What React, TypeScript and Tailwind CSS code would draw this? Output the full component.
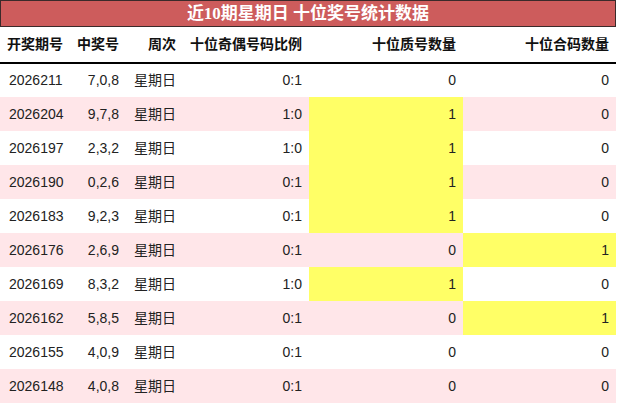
const rows = [
  { issue: "2026211", nums: "7,0,8", ratio: "0:1", prime: 0, composite: 0 },
  { issue: "2026204", nums: "9,7,8", ratio: "1:0", prime: 1, composite: 0 },
  { issue: "2026197", nums: "2,3,2", ratio: "1:0", prime: 1, composite: 0 },
  { issue: "2026190", nums: "0,2,6", ratio: "0:1", prime: 1, composite: 0 },
  { issue: "2026183", nums: "9,2,3", ratio: "0:1", prime: 1, composite: 0 },
  { issue: "2026176", nums: "2,6,9", ratio: "0:1", prime: 0, composite: 1 },
  { issue: "2026169", nums: "8,3,2", ratio: "1:0", prime: 1, composite: 0 },
  { issue: "2026162", nums: "5,8,5", ratio: "0:1", prime: 0, composite: 1 },
  { issue: "2026155", nums: "4,0,9", ratio: "0:1", prime: 0, composite: 0 },
  { issue: "2026148", nums: "4,0,8", ratio: "0:1", prime: 0, composite: 0 },
];

export default function App() {
  return (
    <main
      className="w-[616px] bg-white text-[#222]"
      style={{ fontFamily: '"Liberation Sans", "Noto Sans CJK SC", sans-serif' }}
    >
      {/* Title bar */}
      <div
        className="h-[27px] flex items-center justify-center bg-[#cd5c5c] border border-[#3a2a2a] text-white font-bold text-[17px] leading-none"
        style={{ fontFamily: '"Liberation Serif", "Noto Sans CJK SC", serif' }}
      >
        近10期星期日 十位奖号统计数据
      </div>

      <table className="w-full table-fixed border-collapse text-[14px]">
        <colgroup>
          <col className="w-[70px]" />
          <col className="w-[56px]" />
          <col className="w-[57px]" />
          <col className="w-[126px]" />
          <col className="w-[154px]" />
          <col className="w-[153px]" />
        </colgroup>
        <thead>
          <tr className="h-[36px] border-b-2 border-black text-[#111]">
            <th className="pr-[7px] text-right font-bold whitespace-nowrap">开奖期号</th>
            <th className="pr-[7px] text-right font-bold whitespace-nowrap">中奖号</th>
            <th className="pr-[7px] text-right font-bold whitespace-nowrap">周次</th>
            <th className="pr-[7px] text-right font-bold whitespace-nowrap">十位奇偶号码比例</th>
            <th className="pr-[7px] text-right font-bold whitespace-nowrap">十位质号数量</th>
            <th className="pr-[7px] text-right font-bold whitespace-nowrap">十位合码数量</th>
          </tr>
        </thead>
        <tbody>
          {rows.map((r, i) => (
            <tr key={r.issue} className={`h-[34px] ${i % 2 === 1 ? "bg-[#ffe6e9]" : "bg-white"}`}>
              <td className="pl-[9px] text-left">{r.issue}</td>
              <td className="pr-[7px] text-right">{r.nums}</td>
              <td className="pl-[8px] text-left whitespace-nowrap">星期日</td>
              <td className="pr-[7px] text-right">{r.ratio}</td>
              <td className={`pr-[7px] text-right ${r.prime > 0 ? "bg-[#ffff66]" : ""}`}>{r.prime}</td>
              <td className={`pr-[7px] text-right ${r.composite > 0 ? "bg-[#ffff66]" : ""}`}>{r.composite}</td>
            </tr>
          ))}
        </tbody>
      </table>
    </main>
  );
}
